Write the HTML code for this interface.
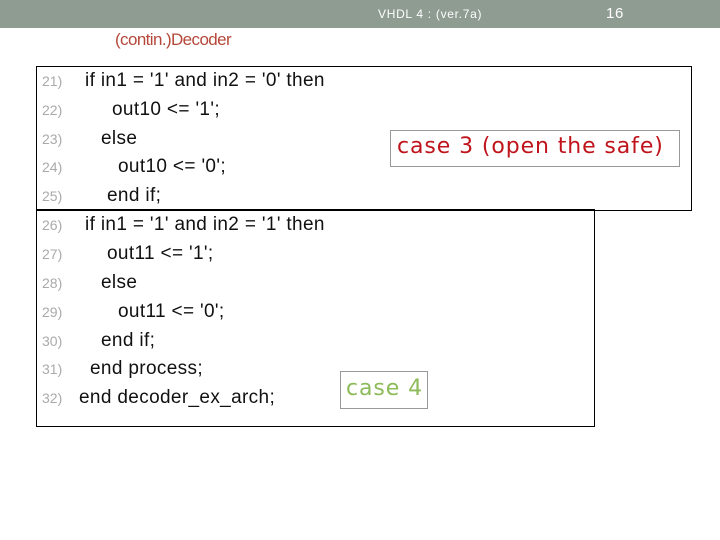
<!DOCTYPE html>
<html><head><meta charset="utf-8"><style>
body{margin:0;width:720px;height:540px;background:#fff;position:relative;overflow:hidden;font-family:"Liberation Sans",sans-serif}
.hdr{position:absolute;left:0;top:0;width:720px;height:28px;background:#8e9c92}
.ht{position:absolute;color:#fff;font-size:12px;top:7px;letter-spacing:0.7px}
.title{position:absolute;left:115px;top:30px;font-size:17px;color:#b5483a;letter-spacing:-0.6px}
.box{position:absolute;border:1.5px solid #000;box-sizing:border-box}
.ln{position:absolute;left:42px;font-size:14px;color:#aaa}
.cd{position:absolute;font-size:19px;color:#111;white-space:pre;letter-spacing:0.35px}
.cb{position:absolute;border:1px solid #999;background:#fff;box-sizing:border-box}
</style></head><body>
<div class="hdr"></div>
<div class="ht" style="left:378px">VHDL 4 : (ver.7a)</div>
<div class="ht" style="left:606px;top:5px;font-size:15px">16</div>
<div class="title">(contin.)Decoder</div>
<div class="box" style="left:36px;top:209px;width:559px;height:218px"></div>
<div class="box" style="left:36px;top:66px;width:656px;height:145px;background:transparent"></div>

<div class="ln" style="top:73px">21)</div><div class="cd" style="left:85px;top:70px">if in1 = '1' and in2 = '0' then</div>
<div class="ln" style="top:102px">22)</div><div class="cd" style="left:112px;top:99px">out10 &lt;= '1';</div>
<div class="ln" style="top:131px">23)</div><div class="cd" style="left:101px;top:128px">else</div>
<div class="ln" style="top:159px">24)</div><div class="cd" style="left:118px;top:156px">out10 &lt;= '0';</div>
<div class="ln" style="top:188px">25)</div><div class="cd" style="left:107px;top:185px">end if;</div>
<div class="ln" style="top:217px">26)</div><div class="cd" style="left:85px;top:214px">if in1 = '1' and in2 = '1' then</div>
<div class="ln" style="top:246px">27)</div><div class="cd" style="left:107px;top:243px">out11 &lt;= '1';</div>
<div class="ln" style="top:275px">28)</div><div class="cd" style="left:101px;top:272px">else</div>
<div class="ln" style="top:304px">29)</div><div class="cd" style="left:118px;top:301px">out11 &lt;= '0';</div>
<div class="ln" style="top:333px">30)</div><div class="cd" style="left:101px;top:330px">end if;</div>
<div class="ln" style="top:361px">31)</div><div class="cd" style="left:90px;top:358px">end process;</div>
<div class="ln" style="top:390px">32)</div><div class="cd" style="left:79px;top:387px">end decoder_ex_arch;</div>

<div class="cb" style="left:390px;top:130px;width:290px;height:37px"></div>
<div class="cd" style="left:397px;top:134px;color:#c0141c;letter-spacing:0.9px;font-family:'DejaVu Sans',sans-serif;font-size:22px">case 3 (open the safe)</div>
<div class="cb" style="left:340px;top:371px;width:88px;height:38px"></div>
<div class="cd" style="left:346px;top:376px;font-size:22px;color:#8dbb5a;letter-spacing:0.9px;font-family:'DejaVu Sans',sans-serif">case 4</div>
</body></html>
